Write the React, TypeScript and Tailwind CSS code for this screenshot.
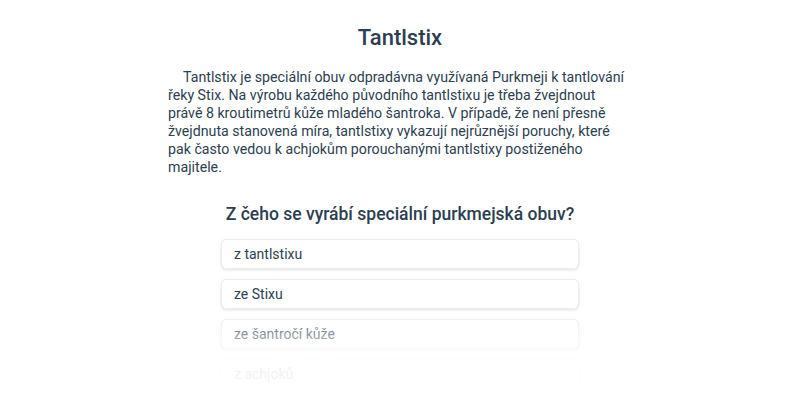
import React from "react";

const options = ["z tantlstixu", "ze Stixu", "ze šantročí kůže", "z achjoků"];

export default function App() {
  return (
    <div
      className="w-[800px] h-[400px] overflow-hidden bg-white text-[#2c3e50] flex flex-col items-center"
      style={{ fontFamily: "Roboto, 'Noto Sans', sans-serif" }}
    >
      <h1 className="mt-[24px] text-[22px] leading-[28px] font-medium">Tantlstix</h1>
      <p className="mt-[16px] w-[464px] text-[14.2px] leading-[18px] indent-[15px]">
        Tantlstix je speciální obuv odpradávna využívaná Purkmeji k tantlování řeky Stix. Na výrobu každého původního tantlstixu je třeba žvejdnout právě 8 kroutimetrů kůže mladého šantroka. V případě, že není přesně žvejdnuta stanovená míra, tantlstixy vykazují nejrůznější poruchy, které pak často vedou k achjokům porouchanými tantlstixy postiženého majitele.
      </p>
      <h2 className="mt-[26px] text-[17.5px] leading-[24px] font-medium">Z čeho se vyrábí speciální purkmejská obuv?</h2>
      <div className="relative mt-[13px] w-[358px] flex flex-col gap-[10px]">
        {options.map((o) => (
          <div
            key={o}
            className="h-[30px] flex items-center px-[12px] rounded-[5px] bg-white border border-[#ececec] shadow-[0_1px_3px_rgba(0,0,0,0.12)] text-[14px]"
          >
            {o}
          </div>
        ))}
        <div className="absolute left-[-10px] right-[-10px] top-[70px] h-[100px] bg-gradient-to-b from-white/0 via-white/90 to-white" />
      </div>
    </div>
  );
}
